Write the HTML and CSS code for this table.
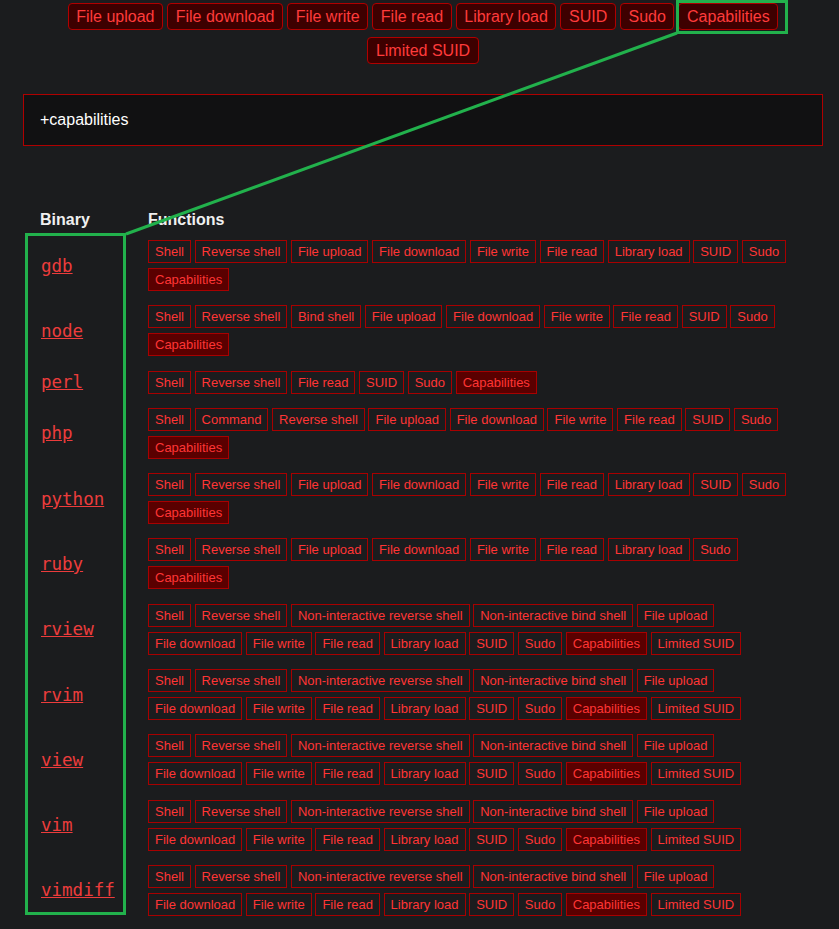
FILE: index.html
```html
<!DOCTYPE html>
<html lang="en">
<head>
  <meta charset="UTF-8" />
  <title>GTFOBins - Capabilities</title>
  <link rel="stylesheet" href="styles.css">
</head>
<body>
  <div class="page">
    <div class="filters">
      <a class="filter">File upload</a>
      <a class="filter">File download</a>
      <a class="filter">File write</a>
      <a class="filter">File read</a>
      <a class="filter">Library load</a>
      <a class="filter">SUID</a>
      <a class="filter">Sudo</a>
      <a class="filter">Capabilities</a>
      <a class="filter">Limited SUID</a>
    </div>

    <div class="search-box">+capabilities</div>

    <div class="bin-table">
      <div class="head">Binary</div>
      <div class="head">Functions</div>

      <div class="bin"><a>gdb</a></div>
      <div class="tags">
        <span>Shell</span><span>Reverse shell</span><span>File upload</span><span>File download</span><span>File write</span><span>File read</span><span>Library load</span><span>SUID</span><span>Sudo</span><span class="on">Capabilities</span>
      </div>

      <div class="bin"><a>node</a></div>
      <div class="tags">
        <span>Shell</span><span>Reverse shell</span><span>Bind shell</span><span>File upload</span><span>File download</span><span>File write</span><span>File read</span><span>SUID</span><span>Sudo</span><span class="on">Capabilities</span>
      </div>

      <div class="bin"><a>perl</a></div>
      <div class="tags">
        <span>Shell</span><span>Reverse shell</span><span>File read</span><span>SUID</span><span>Sudo</span><span class="on">Capabilities</span>
      </div>

      <div class="bin"><a>php</a></div>
      <div class="tags">
        <span>Shell</span><span>Command</span><span>Reverse shell</span><span>File upload</span><span>File download</span><span>File write</span><span>File read</span><span>SUID</span><span>Sudo</span><span class="on">Capabilities</span>
      </div>

      <div class="bin"><a>python</a></div>
      <div class="tags">
        <span>Shell</span><span>Reverse shell</span><span>File upload</span><span>File download</span><span>File write</span><span>File read</span><span>Library load</span><span>SUID</span><span>Sudo</span><span class="on">Capabilities</span>
      </div>

      <div class="bin"><a>ruby</a></div>
      <div class="tags">
        <span>Shell</span><span>Reverse shell</span><span>File upload</span><span>File download</span><span>File write</span><span>File read</span><span>Library load</span><span>Sudo</span><span class="on">Capabilities</span>
      </div>

      <div class="bin"><a>rview</a></div>
      <div class="tags">
        <span>Shell</span><span>Reverse shell</span><span>Non-interactive reverse shell</span><span>Non-interactive bind shell</span><span>File upload</span><span>File download</span><span>File write</span><span>File read</span><span>Library load</span><span>SUID</span><span>Sudo</span><span class="on">Capabilities</span><span>Limited SUID</span>
      </div>

      <div class="bin"><a>rvim</a></div>
      <div class="tags">
        <span>Shell</span><span>Reverse shell</span><span>Non-interactive reverse shell</span><span>Non-interactive bind shell</span><span>File upload</span><span>File download</span><span>File write</span><span>File read</span><span>Library load</span><span>SUID</span><span>Sudo</span><span class="on">Capabilities</span><span>Limited SUID</span>
      </div>

      <div class="bin"><a>view</a></div>
      <div class="tags">
        <span>Shell</span><span>Reverse shell</span><span>Non-interactive reverse shell</span><span>Non-interactive bind shell</span><span>File upload</span><span>File download</span><span>File write</span><span>File read</span><span>Library load</span><span>SUID</span><span>Sudo</span><span class="on">Capabilities</span><span>Limited SUID</span>
      </div>

      <div class="bin"><a>vim</a></div>
      <div class="tags">
        <span>Shell</span><span>Reverse shell</span><span>Non-interactive reverse shell</span><span>Non-interactive bind shell</span><span>File upload</span><span>File download</span><span>File write</span><span>File read</span><span>Library load</span><span>SUID</span><span>Sudo</span><span class="on">Capabilities</span><span>Limited SUID</span>
      </div>

      <div class="bin"><a>vimdiff</a></div>
      <div class="tags">
        <span>Shell</span><span>Reverse shell</span><span>Non-interactive reverse shell</span><span>Non-interactive bind shell</span><span>File upload</span><span>File download</span><span>File write</span><span>File read</span><span>Library load</span><span>SUID</span><span>Sudo</span><span class="on">Capabilities</span><span>Limited SUID</span>
      </div>
    </div>
  </div>

  <!-- annotation drawn over the page -->
  <svg class="markup" width="839" height="929" viewBox="0 0 839 929">
    <rect x="677.5" y="1.5" width="109" height="31" fill="none" stroke="#22b14c" stroke-width="3"/>
    <rect x="26.5" y="234.5" width="98" height="679" fill="none" stroke="#22b14c" stroke-width="3"/>
    <line x1="126" y1="234" x2="677" y2="33" stroke="#22b14c" stroke-width="3"/>
  </svg>
</body>
</html>
```

FILE: styles.css
```css
* {
  box-sizing: border-box;
}
body {
  margin: 0;
  background: #1b1c1e;
  font-family: "Liberation Sans", Arial, sans-serif;
  color: #eee;
}
.page {
  width: 800px;
  margin-left: 23px;
  padding-top: 3px;
}
.filters {
  display: flex;
  flex-wrap: wrap;
  justify-content: center;
  gap: 7px 4px;
}
.filter {
  display: block;
  font-size: 16px;
  line-height: 19px;
  padding: 3px 7.6px;
  color: #ff3b3b;
  background: #3d0000;
  border: 1px solid #b00000;
  border-radius: 4px;
}
.search-box {
  margin-top: 30px;
  padding: 16px;
  line-height: 18px;
  font-size: 16px;
  color: #fff;
  background: #111112;
  border: 1px solid #b00000;
}
.bin-table {
  display: grid;
  grid-template-columns: 108px 1fr;
  row-gap: 14.3px;
  margin-top: 64px;
  padding: 0 28px 0 17px;
}
.head {
  font-weight: bold;
  font-size: 16px;
  line-height: 20px;
  color: #f0f0f0;
  margin-bottom: -4.3px;
}
.bin {
  display: flex;
  align-items: center;
  padding-left: 1px;
}
.bin a {
  font-family: "DejaVu Sans Mono", "Liberation Mono", monospace;
  font-size: 17.5px;
  color: #ec3c3c;
  text-decoration: underline;
}
.tags {
  display: flex;
  flex-wrap: wrap;
  gap: 5px 3.6px;
}
.tags span {
  font-size: 13px;
  line-height: 15px;
  padding: 3px 6px;
  color: #ff3535;
  border: 1px solid #a80000;
}
.tags span.on {
  background: #5a0000;
}
.markup {
  position: absolute;
  top: 0;
  left: 0;
  pointer-events: none;
}
```
